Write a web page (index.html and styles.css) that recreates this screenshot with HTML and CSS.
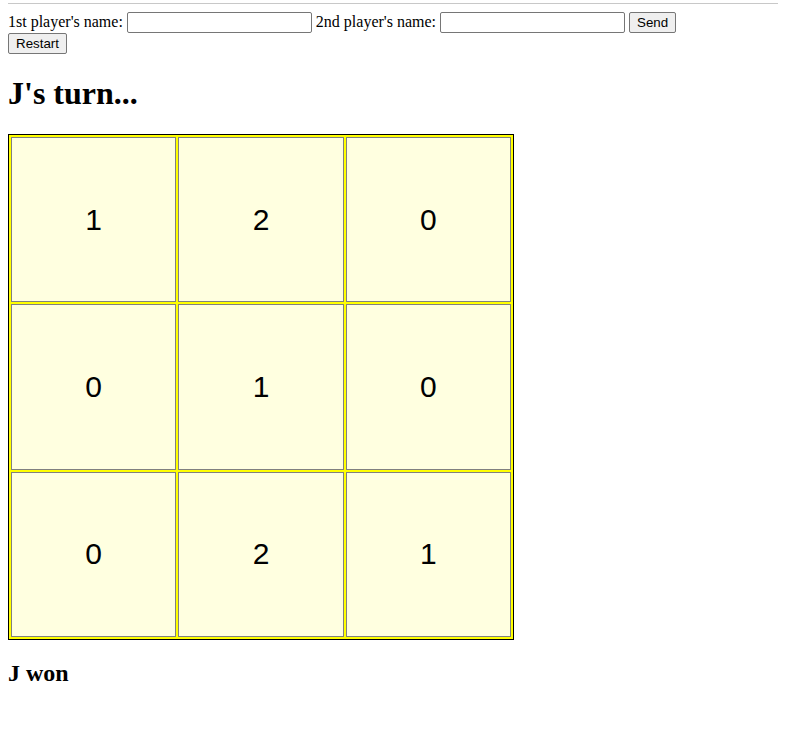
FILE: index.html
```html
<!DOCTYPE html>
<html>
<head>
<meta charset="utf-8">
<link rel="stylesheet" href="styles.css">
</head>
<body>
<div class="topline"></div>
<form class="players">
  1st player's name: <input type="text" class="name"> 2nd player's name: <input type="text" class="name"> <button type="button" class="btn">Send</button><br>
  <button type="button" class="btn">Restart</button>
</form>
<h1 class="turn">J's turn...</h1>
<table class="board">
  <tr><td>1</td><td>2</td><td>0</td></tr>
  <tr><td>0</td><td>1</td><td>0</td></tr>
  <tr><td>0</td><td>2</td><td>1</td></tr>
</table>
<h2 class="result">J won</h2>
</body>
</html>
```
FILE: styles.css
```css
html, body {
  background: #fff;
}
body {
  margin: 0 8px 8px;
  padding-top: 3px;
  font-family: "Liberation Serif", "Times New Roman", serif;
  font-size: 16px;
  color: #000;
}
.topline {
  height: 1px;
  background: #c8c8c8;
  margin: 0 -8px 8px;
}
.players {
  margin: 0;
}
.name {
  font-family: "Liberation Sans", Arial, sans-serif;
  font-size: 13.333px;
  width: 179px;
  padding: 2px 2px;
  border: 1px solid #767676;
  border-radius: 2px;
}
.btn {
  font-family: "Liberation Sans", Arial, sans-serif;
  font-size: 13.333px;
  padding: 2px 7px;
  border: 1px solid #767676;
  border-radius: 2px;
  background: #efefef;
  color: #000;
}
.turn {
  font-size: 32px;
  font-weight: bold;
  margin: 21.44px 0;
}
.board {
  border: 1px solid #000;
  background: #ffff00;
  border-spacing: 2px;
  width: 506px;
  height: 506px;
  table-layout: fixed;
}
.board td {
  border: 1px solid #808080;
  background: #ffffe0;
  text-align: center;
  vertical-align: middle;
  font-family: "Liberation Sans", Arial, sans-serif;
  font-size: 30px;
  padding: 1px;
}
.result {
  font-size: 24px;
  margin: 19.92px 0;
}
```
